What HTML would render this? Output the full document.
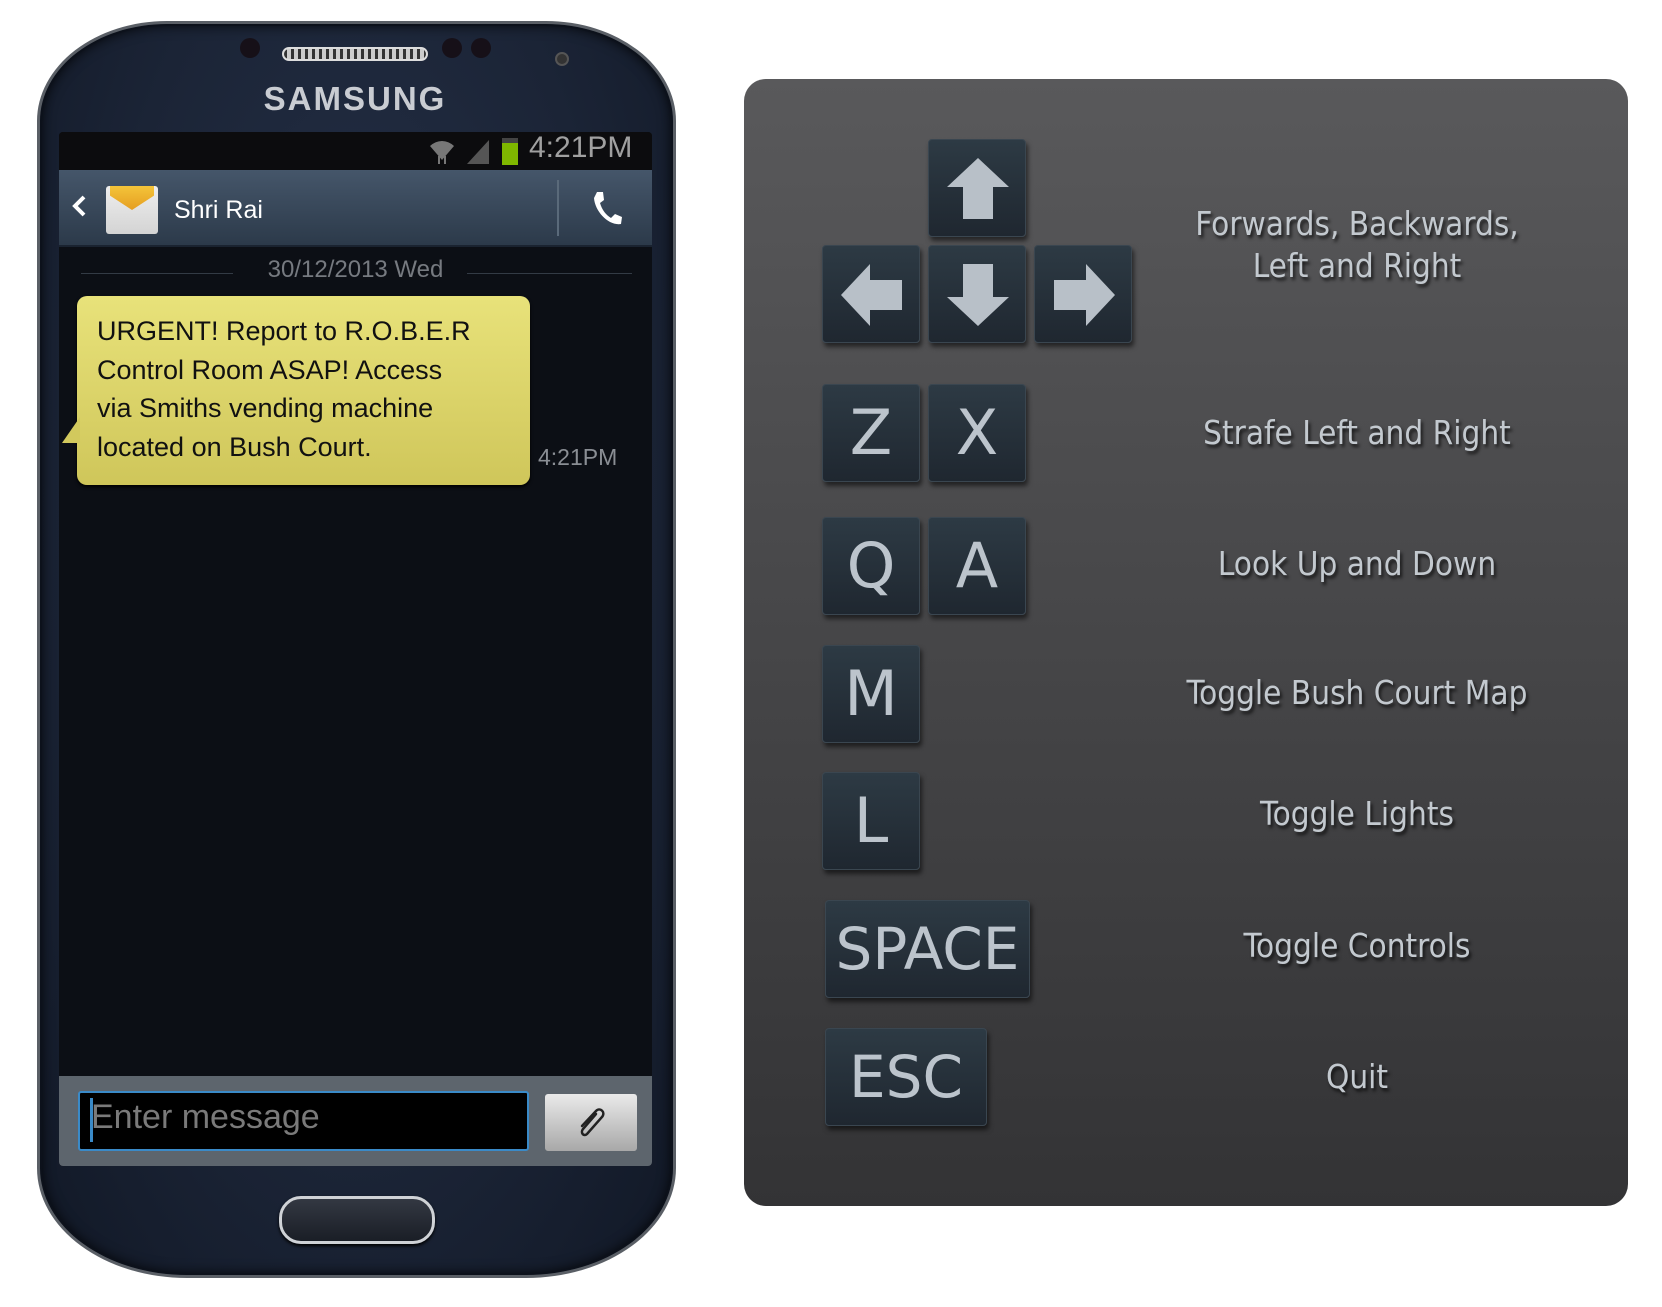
<!DOCTYPE html>
<html><head><meta charset="utf-8"><style>
*{margin:0;padding:0;box-sizing:border-box}
body{width:1662px;height:1307px;background:#fff;position:relative;overflow:hidden;font-family:"Liberation Sans",sans-serif}
.abs{position:absolute}
.phone{left:37px;top:21px;width:639px;height:1257px;background:radial-gradient(ellipse at 50% 40%,#26324a 0%,#1b2436 60%,#111826 100%);border-radius:130px 130px 150px 150px/100px 100px 110px 110px;border:3px solid #5a5f66;box-shadow:inset 0 0 0 2px #0c111b,inset 0 0 14px #000}
.screen{left:59px;top:132px;width:593px;height:1034px;background:#0c0f15;border-radius:4px;overflow:hidden}
.key{position:absolute;width:98px;height:98px;border-radius:4px;background:linear-gradient(#2d3a44,#1f2730);border:1px solid #3a4650;box-shadow:2px 4px 5px rgba(0,0,0,.55);color:#bcc4cc;font-family:"DejaVu Sans","Liberation Sans",sans-serif;font-size:62px;text-align:center;line-height:96px;font-weight:normal}
.lbl{position:absolute;left:1157px;width:400px;text-align:center;color:#c3c9cf;font-family:"Liberation Sans Narrow","DejaVu Sans Condensed","Liberation Sans",sans-serif;font-size:33px;text-shadow:2px 3px 3px rgba(0,0,0,.7);line-height:42px}
</style></head><body>
<div class="abs phone"></div>
<div class="abs" style="left:240px;top:38px;width:20px;height:20px;border-radius:50%;background:#161018"></div>
<div class="abs" style="left:282px;top:47px;width:146px;height:14px;border-radius:8px;background:repeating-linear-gradient(90deg,#333 0 3px,#ccc 3px 7px);border:2px solid #ddd"></div>
<div class="abs" style="left:442px;top:38px;width:20px;height:20px;border-radius:50%;background:#161018"></div>
<div class="abs" style="left:471px;top:38px;width:20px;height:20px;border-radius:50%;background:#161018"></div>
<div class="abs" style="left:555px;top:52px;width:14px;height:14px;border-radius:50%;background:#333;border:2px solid #555"></div>
<div class="abs" style="left:200px;top:80px;width:310px;text-align:center;color:#c9ccd2;font-size:33px;font-weight:bold;letter-spacing:2px">SAMSUNG</div>
<div class="abs screen">
  <div class="abs" style="left:0;top:0;width:593px;height:38px;background:#0c0c0e"></div>
  <svg class="abs" style="left:368px;top:4px" width="30" height="30" viewBox="0 0 30 30"><path d="M3 10 A17 17 0 0 1 27 10 L15 24 Z" fill="#777"/><path d="M12 20 v8 M18 20 v8" stroke="#777" stroke-width="2"/></svg>
  <div class="abs" style="left:408px;top:8px;width:0;height:0;border-left:22px solid transparent;border-bottom:24px solid #555"></div>
  <div class="abs" style="left:443px;top:6px;width:16px;height:27px;background:#7fb800;border-top:5px solid #444"></div>
  <div class="abs" style="left:470px;top:-1px;color:#a0a0a0;font-size:30px">4:21PM</div>
  <div class="abs" style="left:0;top:38px;width:593px;height:77px;background:linear-gradient(#45566a,#2c3a4a);border-bottom:2px solid #1a2330"></div>
  <svg class="abs" style="left:12px;top:62px" width="16" height="24" viewBox="0 0 16 24"><path d="M13 3 L4 12 L13 21" stroke="#fff" stroke-width="4" fill="none"/></svg>
  <div class="abs" style="left:47px;top:54px;width:52px;height:48px;background:linear-gradient(#eee,#d4d4d4);border-radius:3px"></div>
  <div class="abs" style="left:51px;top:54px;width:44px;height:24px;background:linear-gradient(#f4c43a,#e59e22);clip-path:polygon(0 0,100% 0,100% 40%,50% 100%,0 40%)"></div>
  <div class="abs" style="left:115px;top:64px;color:#fff;font-size:25px">Shri Rai</div>
  <div class="abs" style="left:498px;top:48px;width:2px;height:56px;background:#5a6a7a"></div>
  <svg class="abs" style="left:530px;top:58px" width="36" height="38" viewBox="0 0 36 38"><path d="M8 2 L14 2 L15 10 L11 13 C13 20 17 25 22 28 L26 24 L33 27 L32 34 C20 36 6 22 5 8 Z" fill="#fff"/></svg>
  <div class="abs" style="left:22px;top:141px;width:152px;height:1px;background:#333b45"></div>
  <div class="abs" style="left:408px;top:141px;width:165px;height:1px;background:#333b45"></div>
  <div class="abs" style="left:0;top:124px;width:593px;text-align:center;color:#767a80;font-size:24px">30/12/2013 Wed</div>
  <div class="abs" style="left:18px;top:164px;width:453px;height:189px;border-radius:10px;background:linear-gradient(#e8e27a,#cfc65a);box-shadow:0 2px 3px #000"></div>
  <div class="abs" style="left:3px;top:285px;width:0;height:0;border-top:26px solid transparent;border-right:18px solid #d2c95d"></div>
  <div class="abs" style="left:38px;top:180px;color:#111;font-size:27px;line-height:38.5px">URGENT! Report to R.O.B.E.R<br>Control Room ASAP! Access<br>via Smiths vending machine<br>located on Bush Court.</div>
  <div class="abs" style="left:479px;top:312px;color:#8a8e94;font-size:23px">4:21PM</div>
  <div class="abs" style="left:0;top:944px;width:593px;height:90px;background:#5d656d"></div>
  <div class="abs" style="left:19px;top:959px;width:451px;height:60px;background:#000;border:2px solid #3a8ac8;border-radius:3px"></div>
  <div class="abs" style="left:31px;top:966px;width:3px;height:44px;background:#3a8ac8"></div>
  <div class="abs" style="left:32px;top:966px;color:#7a7a7a;font-size:34px">Enter message</div>
  <div class="abs" style="left:486px;top:962px;width:92px;height:57px;border-radius:3px;background:linear-gradient(#eaeaea,#a8a8a8)"></div>
  <svg class="abs" style="left:515px;top:972px" width="36" height="38" viewBox="0 0 36 38"><path d="M22 10 L9 25 C6 29 10 33 13 30 L28 13 C32 8 26 3 22 7 L8 22" stroke="#222" stroke-width="2.5" fill="none" stroke-linecap="round"/></svg>
</div>
<div class="abs" style="left:279px;top:1196px;width:156px;height:48px;border-radius:22px;background:linear-gradient(#333842,#1a1e26);border:3px solid #cfd2d6;box-shadow:0 2px 3px #000"></div>

<div class="abs" style="left:744px;top:79px;width:884px;height:1127px;border-radius:22px;background:linear-gradient(#59595b,#333335)"></div>

<div class="key" style="left:928px;top:139px"><svg width="98" height="98" viewBox="0 0 98 98" style="position:absolute;left:0;top:0"><path d="M49 18 L80 47 L64 47 L64 79 L34 79 L34 47 L18 47 Z" fill="#b8c0c8"/></svg></div>
<div class="key" style="left:822px;top:245px"><svg width="98" height="98" viewBox="0 0 98 98" style="position:absolute;left:0;top:0"><path d="M18 49 L47 18 L47 34 L79 34 L79 64 L47 64 L47 80 Z" fill="#b8c0c8"/></svg></div>
<div class="key" style="left:928px;top:245px"><svg width="98" height="98" viewBox="0 0 98 98" style="position:absolute;left:0;top:0"><path d="M49 80 L80 51 L64 51 L64 18 L34 18 L34 51 L18 51 Z" fill="#b8c0c8"/></svg></div>
<div class="key" style="left:1034px;top:245px"><svg width="98" height="98" viewBox="0 0 98 98" style="position:absolute;left:0;top:0"><path d="M80 49 L51 18 L51 34 L19 34 L19 64 L51 64 L51 80 Z" fill="#b8c0c8"/></svg></div>

<div class="key" style="left:822px;top:384px">Z</div>
<div class="key" style="left:928px;top:384px">X</div>
<div class="key" style="left:822px;top:517px">Q</div>
<div class="key" style="left:928px;top:517px">A</div>
<div class="key" style="left:822px;top:645px">M</div>
<div class="key" style="left:822px;top:772px">L</div>
<div class="key" style="left:825px;top:900px;width:205px;font-size:58px">SPACE</div>
<div class="key" style="left:825px;top:1028px;width:162px;font-size:58px">ESC</div>

<div class="lbl" style="top:203px">Forwards, Backwards,<br>Left and Right</div>
<div class="lbl" style="top:412px">Strafe Left and Right</div>
<div class="lbl" style="top:543px">Look Up and Down</div>
<div class="lbl" style="top:672px">Toggle Bush Court Map</div>
<div class="lbl" style="top:793px">Toggle Lights</div>
<div class="lbl" style="top:925px">Toggle Controls</div>
<div class="lbl" style="top:1056px">Quit</div>
</body></html>
